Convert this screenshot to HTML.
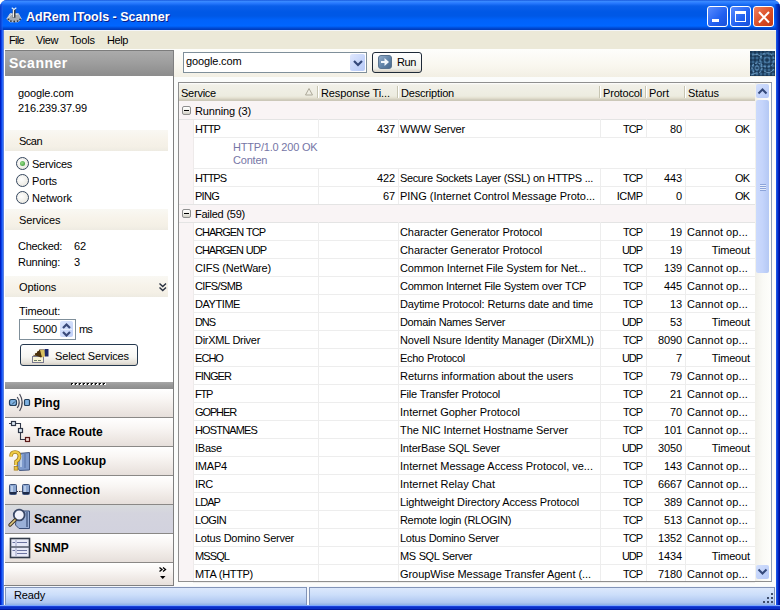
<!DOCTYPE html>
<html><head><meta charset="utf-8">
<style>
*{margin:0;padding:0;box-sizing:border-box}
html,body{width:780px;height:610px;overflow:hidden;background:#fff;font-family:"Liberation Sans",sans-serif;font-size:11px;color:#000;letter-spacing:-0.15px}
.a{position:absolute;white-space:nowrap}
#win{position:absolute;left:0;top:0;width:780px;height:610px;background:#0A3FD8;border-radius:7px 7px 0 0;overflow:hidden}
#title{left:0;top:0;width:780px;height:30px;background:linear-gradient(#0A46D0 0px,#3D8DFF 1px,#2A7BFF 3px,#0A5FEA 6px,#0058E6 12px,#0058E6 16px,#0062FA 20px,#0066FF 26px,#004BD6 28px,#003AB5 30px)}
#ttext{left:26px;top:10px;font-size:12.5px;font-weight:bold;color:#fff;text-shadow:1px 1px 0 #0A1E8A;letter-spacing:0}
.tb{top:6px;width:21px;height:21px;border:1px solid #fff;border-radius:3px;background:linear-gradient(135deg,#5A8CFF,#2060F0 60%,#1A50D8)}
#client{left:4px;top:30px;width:772px;height:576px;background:#FBFCFB}
#lb{left:0;top:30px;width:4px;height:580px;background:linear-gradient(90deg,#001EC4 0,#001EC4 1px,#0A44E6 1px,#0A44E6 2px,#2A66FA 2px,#2A66FA 3px,#5A7EE0 3px)}
#rb{left:776px;top:30px;width:4px;height:580px;background:linear-gradient(90deg,#1A52E4 0,#1A52E4 1px,#0A3CD8 1px,#0A3CD8 2px,#0024B8 2px,#0024B8 3px,#0010A0 3px)}
#bb{left:0;top:605px;width:780px;height:5px;background:linear-gradient(#7AA6FF 0,#7AA6FF 1px,#1A40D8 1px,#1A40D8 2px,#0A30C8 2px,#0A30C8 4px,#0018A0 4px)}
#menu{left:4px;top:30px;width:772px;height:19px;background:#ECE9D8;border-top:1px solid #F4F6FA}
.mi{top:3px}
/* left panel */
#lp{left:4px;top:50px;width:170px;height:536px;background:#fff;border-right:1px solid #7F7F7F;border-bottom:1px solid #7F7F7F}
#lphead{left:5px;top:50px;width:168px;height:26px;background:linear-gradient(#ABABAB,#A0A0A0 40%,#8C8C8C);border-top:1px solid #7C7C7C}
#lphead span{left:4px;top:4px;font-size:14px;font-weight:bold;color:#fff;letter-spacing:0.5px}
.sec{left:5px;width:163px;height:21px;background:linear-gradient(#F9F8F3 0%,#F7F3EA 45%,#F4F0E6 80%,#EEEBE2 100%)}
.sec span{left:14px;top:5px}
.radio{width:13px;height:13px;border-radius:50%;border:1px solid #34465E;background:radial-gradient(circle at 40% 40%,#fff,#E4E2D8)}
.radio.on::after{content:"";position:absolute;left:3px;top:3px;width:5px;height:5px;border-radius:50%;background:radial-gradient(circle at 40% 40%,#9AE08A,#2C8C2C)}
.navb{left:5px;width:168px;height:29px;background:linear-gradient(#FFFFFF,#F9F6F4 35%,#EEE8E4 75%,#E6DFDB);border-bottom:1px solid #8A8886}
.navb span{left:29px;top:7px;font-size:12px;font-weight:bold;letter-spacing:0}
/* right */
#tool{left:174px;top:49px;width:602px;height:28px;background:linear-gradient(#FEFEFC,#F9F7EF 60%,#F2EFE4)}
#combo{left:183px;top:52px;width:184px;height:21px;background:#fff;border:1px solid #7F8F9A}
#combo span{left:2px;top:2px}
#drop{left:350px;top:54px;width:15px;height:17px;border-radius:2px;background:linear-gradient(135deg,#E0E8FE,#C4D4FA 60%,#B8CAF6)}
#run{left:372px;top:52px;width:50px;height:21px;border:1px solid #1E2A38;border-radius:3px;background:linear-gradient(#FFFFFF,#F0F0EA 80%,#D6D0C5)}
#tbl{left:178px;top:82px;width:594px;height:500px;background:#fff;border:1px solid #8F8F8F;border-right-color:#8FA0B8}
#hdr{left:179px;top:83px;width:576px;height:18px;background:linear-gradient(#FFFFFF 0px,#F1F0E8 2px,#EDECE0 13px,#E4E0D0 15px,#D8D4C4 16px,#CCC8B9 17px)}
.hs{top:86px;width:1px;height:12px;background:#C7C5B2;box-shadow:1px 0 0 #fff}
.ht{top:87px}
.t{}
.u{letter-spacing:-0.8px}
.dd{letter-spacing:0.6px}
.r{text-align:right}
.hl{height:1px;background:#EDEDED}
.vl{width:1px;background:#EDEDED}
.gl{background:#E4E4E4}
.grp{background:#F9F4F5}
#gut{left:179px;top:101px;width:15px;height:480px;background:#F9F4F5;border-right:1px solid #EEEAEA}
.minus{width:9px;height:9px;border:1px solid #8E8E8E;border-radius:2px;background:linear-gradient(#FFFFFF,#F0EFEA 50%,#D2D0C6)}
.minus::after{content:"";position:absolute;left:1px;top:3px;width:5px;height:1px;background:#000}
.det{color:#7676A6;line-height:13px;letter-spacing:-0.2px}
#sb{left:755px;top:83px;width:16px;height:498px;background:linear-gradient(90deg,#F1F0EA,#FAFAF6 50%,#FEFEFB)}
.sbb{left:756px;width:13px;height:14px;border-radius:2px;background:linear-gradient(135deg,#D2DFFD,#B6C9F7)}
#thumb{left:756px;top:100px;width:13px;height:173px;border-radius:2px;background:linear-gradient(90deg,#CCDAFC,#C4D4FB 50%,#B4C8F4)}
#status{left:4px;top:586px;width:772px;height:19px;background:#F4F7FC}
.sp{top:587px;height:18px;border:1px solid #8294B8;border-bottom:none;background:linear-gradient(#DCE8FC,#CCDEFA 40%,#AFC7F0 85%,#8FB0E4)}
</style></head><body>
<div id="win">
  <div id="title" class="a"></div>
  <!-- app icon -->
  <svg class="a" style="left:3px;top:4px" width="20" height="20" viewBox="0 0 24 24">
    <path d="M4.5 18L8.5 11.5H18.5L22 18L18 21.5H8.5Z" fill="#A4ACB4" stroke="#D8E0EA" stroke-width="0.8"/>
    <path d="M6 17.5L9.5 12.5H17.5" stroke="#E8ECF2" stroke-width="1" fill="none"/>
    <circle cx="6.5" cy="18.5" r="1.1" fill="#283040"/><circle cx="9.5" cy="20.5" r="1.1" fill="#283040"/>
    <circle cx="13.5" cy="21" r="1.1" fill="#283040"/><circle cx="17.5" cy="20.5" r="1.1" fill="#283040"/>
    <circle cx="20.5" cy="18.5" r="1.1" fill="#283040"/>
    <rect x="11.5" y="6" width="3.5" height="10.5" fill="#3A4048"/>
    <rect x="11.8" y="6.5" width="1.4" height="9.5" fill="#F0F0F0"/>
    <path d="M10.5 4.5L13.2 6.5L16 4.5" stroke="#E0EEFF" stroke-width="1.4" fill="none"/>
  </svg>
  <div class="a" style="left:775px;top:4px;width:5px;height:26px;background:linear-gradient(90deg,rgba(0,60,220,0.3),#0034C8 40%,#0020A0 80%,#001890)"></div>
  <div class="a" style="left:0;top:4px;width:3px;height:26px;background:linear-gradient(90deg,#0838C8,rgba(40,110,250,0.5))"></div>
  <div id="ttext" class="a">AdRem ITools - Scanner</div>
  <div class="a tb" style="left:707px"><div class="a" style="left:4px;top:12px;width:7px;height:3px;background:#fff"></div></div>
  <div class="a tb" style="left:730px"><div class="a" style="left:4px;top:4px;width:11px;height:11px;border:1px solid #fff;border-top-width:3px"></div></div>
  <div class="a tb" style="left:753px;background:linear-gradient(135deg,#F08060,#D84A22 60%,#C23A15)">
    <svg class="a" style="left:3px;top:3px" width="14" height="14"><path d="M2 2L12 12.5M12 2L2 12.5" stroke="#fff" stroke-width="2"/></svg>
  </div>
  <div id="client" class="a"></div>
  <div id="lb" class="a"></div><div id="rb" class="a"></div><div id="bb" class="a"></div>
  <div id="menu" class="a">
    <span class="a mi" style="letter-spacing:-0.68px;left:5px">File</span>
    <span class="a mi" style="letter-spacing:-0.41px;left:32px">View</span>
    <span class="a mi" style="letter-spacing:-0.14px;left:66px">Tools</span>
    <span class="a mi" style="letter-spacing:-0.41px;left:103px">Help</span>
  </div>

  <!-- left panel -->
  <div id="lp" class="a"></div>
  <div id="lphead" class="a"><span class="a">Scanner</span></div>
  <span class="a" style="letter-spacing:-0.14px;left:18px;top:87px">google.com</span>
  <span class="a" style="letter-spacing:-0.10px;left:18px;top:102px">216.239.37.99</span>

  <div class="a sec" style="top:130px"><span class="a" style="letter-spacing:-0.52px">Scan</span></div>
  <div class="a radio on" style="left:16px;top:157px"></div><span class="a" style="letter-spacing:-0.27px;left:32px;top:158px">Services</span>
  <div class="a radio" style="left:16px;top:174px"></div><span class="a" style="letter-spacing:-0.14px;left:32px;top:175px">Ports</span>
  <div class="a radio" style="left:16px;top:191px"></div><span class="a" style="letter-spacing:-0.05px;left:32px;top:192px">Network</span>

  <div class="a sec" style="top:209px"><span class="a" style="letter-spacing:-0.09px">Services</span></div>
  <span class="a" style="letter-spacing:-0.31px;left:18px;top:240px">Checked:</span><span class="a" style="letter-spacing:-0.12px;left:74px;top:240px">62</span>
  <span class="a" style="letter-spacing:-0.26px;left:18px;top:256px">Running:</span><span class="a" style="letter-spacing:-0.12px;left:74px;top:256px">3</span>

  <div class="a sec" style="top:276px"><span class="a" style="letter-spacing:-0.13px">Options</span>
    <svg class="a" style="left:153px;top:6px" width="9" height="10"><path d="M1.5 1.5L4.75 4.5L8 1.5M1.5 5.5L4.75 8.5L8 5.5" fill="none" stroke="#283040" stroke-width="1.4"/></svg>
  </div>
  <span class="a" style="letter-spacing:-0.17px;left:19px;top:305px">Timeout:</span>
  <div class="a" style="left:19px;top:319px;width:57px;height:21px;border:1px solid #7F8F9A;background:#fff"></div>
  <span class="a r" style="letter-spacing:-0.12px;margin-right:0.12px;right:723px;top:323px">5000</span>
  <div class="a" style="left:60px;top:321px;width:13px;height:16px;background:linear-gradient(135deg,#DCE6FD,#C0D0F8);border-radius:2px"></div>
  <svg class="a" style="left:60px;top:321px" width="13" height="16"><path d="M3 7L6.5 3.5L10 7M3 11L6.5 14.5L10 11" fill="none" stroke="#3A4A7A" stroke-width="2.2"/><path d="M1 8.5H12" stroke="#E8EEFC" stroke-width="1"/></svg>
  <span class="a" style="letter-spacing:-0.84px;left:79px;top:323px">ms</span>
  <div class="a" style="left:20px;top:344px;width:118px;height:22px;border:1px solid #24384E;border-radius:3px;background:linear-gradient(#FFFFFF,#F6F6F2 60%,#E4E0D8 90%,#D2CCC2)"></div>
  <svg class="a" style="left:31px;top:346px" width="20" height="19" viewBox="31 346 20 19">
    <rect x="32.5" y="356.5" width="11" height="6" fill="#F6F2D4" stroke="#7A7A90" stroke-width="1"/>
    <path d="M34 360.5H37M38 360.5H41" stroke="#6A7A6A" stroke-width="1"/>
    <path d="M33 355.5L39.5 349.5H44L46 354L41 357.5L37 356Z" fill="#4A300C"/>
    <path d="M40 350H45.5L47 355.5L42 357.5Z" fill="#D8C060"/>
    <path d="M44.5 349H48.5V356.5H45Z" fill="#1C2868"/>
    <path d="M34 355L35 354M36 353L37 352M38 351L39 350" stroke="#F0E8D0" stroke-width="1"/>
  </svg>
  <span class="a" style="letter-spacing:-0.13px;word-spacing:0.07px;left:55px;top:350px">Select Services</span>

  <!-- splitter -->
  <div class="a" style="left:5px;top:382px;width:168px;height:7px;background:linear-gradient(#A8A8A8,#999 40%,#8C8C8C)"></div>
  <svg class="a" style="left:0;top:0" width="120" height="400" viewBox="0 0 120 400"><path d="M71 383h2v1h-1v1h-1z" fill="#101010"/><path d="M72 385h2v-2h-1v1h-1z" fill="#FFFFFF"/><path d="M75 383h2v1h-1v1h-1z" fill="#101010"/><path d="M76 385h2v-2h-1v1h-1z" fill="#FFFFFF"/><path d="M79 383h2v1h-1v1h-1z" fill="#101010"/><path d="M80 385h2v-2h-1v1h-1z" fill="#FFFFFF"/><path d="M83 383h2v1h-1v1h-1z" fill="#101010"/><path d="M84 385h2v-2h-1v1h-1z" fill="#FFFFFF"/><path d="M87 383h2v1h-1v1h-1z" fill="#101010"/><path d="M88 385h2v-2h-1v1h-1z" fill="#FFFFFF"/><path d="M91 383h2v1h-1v1h-1z" fill="#101010"/><path d="M92 385h2v-2h-1v1h-1z" fill="#FFFFFF"/><path d="M95 383h2v1h-1v1h-1z" fill="#101010"/><path d="M96 385h2v-2h-1v1h-1z" fill="#FFFFFF"/><path d="M99 383h2v1h-1v1h-1z" fill="#101010"/><path d="M100 385h2v-2h-1v1h-1z" fill="#FFFFFF"/><path d="M103 383h2v1h-1v1h-1z" fill="#101010"/><path d="M104 385h2v-2h-1v1h-1z" fill="#FFFFFF"/></svg>

  <div class="a navb" style="top:389px"><span class="a">Ping</span></div>
  <div class="a navb" style="top:418px"><span class="a">Trace Route</span></div>
  <div class="a navb" style="top:447px"><span class="a">DNS Lookup</span></div>
  <div class="a navb" style="top:476px"><span class="a">Connection</span></div>
  <div class="a navb" style="top:505px;background:linear-gradient(#D8DBDD,#D4D4DE 30%,#D2D2DE)"><span class="a" style="letter-spacing:-0.04px">Scanner</span></div>
  <div class="a navb" style="top:534px"><span class="a">SNMP</span></div>
  <div class="a" style="left:5px;top:563px;width:168px;height:22px;background:linear-gradient(#FFFFFF,#F9F6F4 35%,#EEE8E4 75%,#E6DFDB)"></div>
  <svg class="a" style="left:158px;top:566px" width="10" height="15"><path d="M1.5 1.5L4 3.5L1.5 5.5M5 1.5L7.5 3.5L5 5.5" fill="none" stroke="#000" stroke-width="1.3"/><path d="M2 10H7.5L4.75 13Z" fill="#000"/></svg>

  <!-- nav icons -->
  <svg class="a" style="left:0;top:380px" width="40" height="200" viewBox="0 380 40 200">
    <!-- ping -->
    <rect x="9.5" y="399.5" width="7" height="6" rx="2" fill="#7FB2E2" stroke="#24405C" stroke-width="1.2"/>
    <path d="M12 404.5L15 401.5" stroke="#2E4A64" stroke-width="1"/>
    <path d="M17.2 397Q21.2 402.5 17.2 408" fill="none" stroke="#4A4C5A" stroke-width="1.2"/>
    <path d="M19.6 394Q24.8 402.5 19.6 411" fill="none" stroke="#4A4C5A" stroke-width="1.2"/>
    <rect x="24.5" y="399.5" width="5" height="6" rx="1" fill="#7FB2E2" stroke="#24405C" stroke-width="1.2"/>
    <!-- trace route -->
    <path d="M9 423.5H12M15.5 423.5H20.5V429M20.5 432.5V439.5H25.5" fill="none" stroke="#303848" stroke-width="1.1"/>
    <rect x="11.5" y="421.5" width="4" height="4" fill="#DCE8F4" stroke="#303848" stroke-width="1.2"/>
    <rect x="18.5" y="428.5" width="4" height="4" fill="#DCE8F4" stroke="#303848" stroke-width="1.2"/>
    <rect x="25.5" y="437.5" width="4" height="4" fill="#F4D8D0" stroke="#5A1A18" stroke-width="1.2"/>
    <!-- dns -->
    <path d="M18.5 453.5L29.5 452.5V470L19.5 470.5L17 467Z" fill="#7E9ACC" stroke="#3A4E78" stroke-width="0.9"/>
    <path d="M21 455V467" stroke="#C8D8F0" stroke-width="1.5"/>
    <path d="M25 454V468" stroke="#5C78AC" stroke-width="1.2"/>
    <path d="M11 456.5Q11 452 15 452Q19.5 452 19.5 456.5Q19.5 459.5 16 461.5V465" fill="none" stroke="#A8821C" stroke-width="3.6"/>
    <path d="M11 456.5Q11 452 15 452Q19.5 452 19.5 456.5Q19.5 459.5 16 461.5V465" fill="none" stroke="#F0CC48" stroke-width="2"/>
    <rect x="14.2" y="466.5" width="3.6" height="3.6" fill="#E8C040" stroke="#A8821C" stroke-width="0.8"/>
    <!-- connection -->
    <rect x="9.5" y="484.5" width="7" height="10" rx="1" fill="#8CA6D0" stroke="#3E527A" stroke-width="1"/>
    <path d="M12 486V492" stroke="#D8E4F6" stroke-width="1.2"/>
    <rect x="10" y="492" width="6" height="2" fill="#1E2A48"/>
    <rect x="22.5" y="484.5" width="7" height="10" rx="1" fill="#8CA6D0" stroke="#3E527A" stroke-width="1"/>
    <path d="M25 486V492" stroke="#D8E4F6" stroke-width="1.2"/>
    <rect x="23" y="492" width="6" height="2" fill="#1E2A48"/>
    <path d="M16.5 491.5H22.5" stroke="#3A3A48" stroke-width="1.2" stroke-dasharray="1.5 1"/>
    <!-- scanner -->
    <path d="M17 511H29.5V528.5H19L15.5 525Z" fill="#9AB0D8" stroke="#3A4E78" stroke-width="1"/>
    <path d="M27 512V527" stroke="#3A4E78" stroke-width="1.2"/>
    <circle cx="19.2" cy="515" r="5.4" fill="#F2F2FC" stroke="#3A4868" stroke-width="1.8"/>
    <path d="M15 520L10 525" stroke="#3A3020" stroke-width="3.4" stroke-linecap="round"/>
    <path d="M15 520L10 525" stroke="#E0C880" stroke-width="1.6" stroke-linecap="round"/>
    <!-- snmp -->
    <rect x="10.5" y="538.5" width="19" height="19" fill="#E8EAF8" stroke="#343C4C" stroke-width="1.6"/>
    <path d="M10.5 547H29.5" stroke="#5A6070" stroke-width="1.6"/>
    <path d="M12.5 542.5H15M17 542.5H27M12.5 550.5H15M17 550.5H27M17 553.5H27" stroke="#6C74A0" stroke-width="1"/><path d="M16 540V546M16 548V556" stroke="#8890B8" stroke-width="0.8"/>
  </svg>
  <!-- right area -->
  <div id="tool" class="a"></div>
  <div id="combo" class="a"><span class="a" style="letter-spacing:-0.14px">google.com</span></div>
  <div id="drop" class="a"><svg class="a" style="left:2px;top:5px" width="12" height="9"><path d="M2 2L6 6L10 2" fill="none" stroke="#34487A" stroke-width="2.2"/></svg></div>
  <div id="run" class="a"></div>
  <svg class="a" style="left:378px;top:55px" width="14" height="14" viewBox="0 0 14 14">
    <defs><linearGradient id="rg" x1="0" y1="0" x2="1" y2="1"><stop offset="0" stop-color="#9AB2CE"/><stop offset="0.5" stop-color="#6486AA"/><stop offset="1" stop-color="#46668A"/></linearGradient></defs>
    <rect x="0.5" y="0.5" width="13" height="13" rx="2.5" fill="url(#rg)" stroke="#5A7490" stroke-width="1"/>
    <path d="M3 6H6.5V3L11 7L6.5 11V8H3Z" fill="#F4F8FC"/>
  </svg>
  <span class="a" style="letter-spacing:-0.40px;left:397px;top:56px">Run</span>
  <svg class="a" style="left:750px;top:51px" width="25" height="25" viewBox="0 0 25 25">
    <rect width="25" height="25" fill="#24486A"/>
    <rect width="25" height="25" fill="url(#gn)" opacity="0.9"/>
    <circle cx="7" cy="17" r="5" fill="none" stroke="#6C9CC4" stroke-width="1.2" stroke-dasharray="2 1.5"/>
    <circle cx="7" cy="17" r="2" fill="none" stroke="#5A88B0" stroke-width="1"/>
    <circle cx="17" cy="9" r="7" fill="none" stroke="#5E90BA" stroke-width="1.2" stroke-dasharray="2.5 1.5"/>
    <circle cx="17" cy="9" r="3" fill="none" stroke="#4A7AA4" stroke-width="1"/>
    <path d="M2 4Q8 2 12 6M14 20Q20 24 24 18M1 24L6 22" stroke="#7AA8CC" stroke-width="1" fill="none" opacity="0.8"/>
    <defs><pattern id="gn" width="4" height="4" patternUnits="userSpaceOnUse"><rect x="0" y="0" width="2" height="2" fill="#183654"/><rect x="2" y="2" width="2" height="2" fill="#3C6A92"/></pattern></defs>
  </svg>

  <div id="tbl" class="a"></div>
  <div id="hdr" class="a"></div>
  <div class="a hs" style="left:317px"></div>
  <div class="a hs" style="left:397px"></div>
  <div class="a hs" style="left:599px"></div>
  <div class="a hs" style="left:645px"></div>
  <div class="a hs" style="left:684px"></div>
  <span class="a ht" style="letter-spacing:-0.24px;left:181px">Service</span>
  <svg class="a" style="left:305px;top:88px" width="8" height="8"><path d="M4 0.5L7.5 7H0.5Z" fill="none" stroke="#ACA899" stroke-width="1"/></svg>
  <span class="a ht" style="letter-spacing:-0.10px;word-spacing:0.04px;left:321px">Response Ti...</span>
  <span class="a ht" style="letter-spacing:-0.18px;left:401px">Description</span>
  <span class="a ht" style="letter-spacing:-0.17px;left:603px">Protocol</span>
  <span class="a ht" style="letter-spacing:-0.05px;left:649px">Port</span>
  <span class="a ht" style="letter-spacing:-0.03px;left:688px">Status</span>
  <div id="gut" class="a"></div>
<div class="a grp" style="left:179px;top:101px;width:576px;height:18px"></div>
<div class="a hl gl" style="left:179px;top:119px;width:576px"></div>
<div class="a minus" style="left:182px;top:106px"></div>
<span class="a t" style="letter-spacing:-0.14px;word-spacing:0.08px;left:195px;top:105px">Running (3)</span>
<div class="a hl" style="left:193px;top:137px;width:562px"></div>
<div class="a vl" style="left:318px;top:119px;height:19px"></div>
<div class="a vl" style="left:398px;top:119px;height:19px"></div>
<div class="a vl" style="left:600px;top:119px;height:19px"></div>
<div class="a vl" style="left:646px;top:119px;height:19px"></div>
<div class="a vl" style="left:685px;top:119px;height:19px"></div>
<span class="a t" style="letter-spacing:-0.93px;left:195px;top:123px">HTTP</span>
<span class="a t r" style="letter-spacing:-0.12px;margin-right:0.12px;right:385px;top:123px">437</span>
<span class="a t" style="letter-spacing:-0.17px;word-spacing:0.11px;left:400px;top:123px">WWW Server</span>
<span class="a t r" style="letter-spacing:-1.00px;margin-right:1.00px;right:137px;top:123px">TCP</span>
<span class="a t r" style="letter-spacing:-0.12px;margin-right:0.12px;right:98px;top:123px">80</span>
<span class="a t r" style="letter-spacing:-0.95px;margin-right:0.95px;right:30px;top:123px">OK</span>
<div class="a hl" style="left:193px;top:168px;width:562px"></div>
<span class="a t det" style="left:233px;top:141px">HTTP/1.0 200 OK<br>Conten</span>
<div class="a hl" style="left:193px;top:186px;width:562px"></div>
<div class="a vl" style="left:318px;top:168px;height:19px"></div>
<div class="a vl" style="left:398px;top:168px;height:19px"></div>
<div class="a vl" style="left:600px;top:168px;height:19px"></div>
<div class="a vl" style="left:646px;top:168px;height:19px"></div>
<div class="a vl" style="left:685px;top:168px;height:19px"></div>
<span class="a t" style="letter-spacing:-1.01px;left:195px;top:172px">HTTPS</span>
<span class="a t r" style="letter-spacing:-0.12px;margin-right:0.12px;right:385px;top:172px">422</span>
<span class="a t" style="letter-spacing:-0.37px;word-spacing:0.31px;left:400px;top:172px">Secure Sockets Layer (SSL) on HTTPS ...</span>
<span class="a t r" style="letter-spacing:-1.00px;margin-right:1.00px;right:137px;top:172px">TCP</span>
<span class="a t r" style="letter-spacing:-0.12px;margin-right:0.12px;right:98px;top:172px">443</span>
<span class="a t r" style="letter-spacing:-0.95px;margin-right:0.95px;right:30px;top:172px">OK</span>
<div class="a hl" style="left:193px;top:204px;width:562px"></div>
<div class="a vl" style="left:318px;top:186px;height:19px"></div>
<div class="a vl" style="left:398px;top:186px;height:19px"></div>
<div class="a vl" style="left:600px;top:186px;height:19px"></div>
<div class="a vl" style="left:646px;top:186px;height:19px"></div>
<div class="a vl" style="left:685px;top:186px;height:19px"></div>
<span class="a t" style="letter-spacing:-0.73px;left:195px;top:190px">PING</span>
<span class="a t r" style="letter-spacing:-0.12px;margin-right:0.12px;right:385px;top:190px">67</span>
<span class="a t" style="letter-spacing:-0.01px;word-spacing:-0.05px;left:400px;top:190px">PING (Internet Control Message Proto...</span>
<span class="a t r" style="letter-spacing:-0.38px;margin-right:0.38px;right:137px;top:190px">ICMP</span>
<span class="a t r" style="letter-spacing:-0.12px;margin-right:0.12px;right:98px;top:190px">0</span>
<span class="a t r" style="letter-spacing:-0.95px;margin-right:0.95px;right:30px;top:190px">OK</span>
<div class="a grp" style="left:179px;top:204px;width:576px;height:18px"></div>
<div class="a hl gl" style="left:179px;top:204px;width:576px"></div>
<div class="a hl gl" style="left:179px;top:222px;width:576px"></div>
<div class="a minus" style="left:182px;top:209px"></div>
<span class="a t" style="letter-spacing:-0.25px;word-spacing:0.19px;left:195px;top:208px">Failed (59)</span>
<div class="a hl" style="left:193px;top:240px;width:562px"></div>
<div class="a vl" style="left:318px;top:222px;height:19px"></div>
<div class="a vl" style="left:398px;top:222px;height:19px"></div>
<div class="a vl" style="left:600px;top:222px;height:19px"></div>
<div class="a vl" style="left:646px;top:222px;height:19px"></div>
<div class="a vl" style="left:685px;top:222px;height:19px"></div>
<span class="a t" style="letter-spacing:-0.98px;word-spacing:0.92px;left:195px;top:226px">CHARGEN TCP</span>
<span class="a t" style="letter-spacing:-0.08px;word-spacing:0.02px;left:400px;top:226px">Character Generator Protocol</span>
<span class="a t r" style="letter-spacing:-1.00px;margin-right:1.00px;right:137px;top:226px">TCP</span>
<span class="a t r" style="letter-spacing:-0.12px;margin-right:0.12px;right:98px;top:226px">19</span>
<span class="a t" style="letter-spacing:0.10px;word-spacing:-0.16px;left:687px;top:226px">Cannot op...</span>
<div class="a hl" style="left:193px;top:258px;width:562px"></div>
<div class="a vl" style="left:318px;top:240px;height:19px"></div>
<div class="a vl" style="left:398px;top:240px;height:19px"></div>
<div class="a vl" style="left:600px;top:240px;height:19px"></div>
<div class="a vl" style="left:646px;top:240px;height:19px"></div>
<div class="a vl" style="left:685px;top:240px;height:19px"></div>
<span class="a t" style="letter-spacing:-1.02px;word-spacing:0.96px;left:195px;top:244px">CHARGEN UDP</span>
<span class="a t" style="letter-spacing:-0.08px;word-spacing:0.02px;left:400px;top:244px">Character Generator Protocol</span>
<span class="a t r" style="letter-spacing:-1.08px;margin-right:1.08px;right:137px;top:244px">UDP</span>
<span class="a t r" style="letter-spacing:-0.12px;margin-right:0.12px;right:98px;top:244px">19</span>
<span class="a t r" style="letter-spacing:-0.19px;margin-right:0.19px;right:30px;top:244px">Timeout</span>
<div class="a hl" style="left:193px;top:276px;width:562px"></div>
<div class="a vl" style="left:318px;top:258px;height:19px"></div>
<div class="a vl" style="left:398px;top:258px;height:19px"></div>
<div class="a vl" style="left:600px;top:258px;height:19px"></div>
<div class="a vl" style="left:646px;top:258px;height:19px"></div>
<div class="a vl" style="left:685px;top:258px;height:19px"></div>
<span class="a t" style="letter-spacing:-0.18px;word-spacing:0.12px;left:195px;top:262px">CIFS (NetWare)</span>
<span class="a t" style="letter-spacing:-0.13px;word-spacing:0.07px;left:400px;top:262px">Common Internet File System for Net...</span>
<span class="a t r" style="letter-spacing:-1.00px;margin-right:1.00px;right:137px;top:262px">TCP</span>
<span class="a t r" style="letter-spacing:-0.12px;margin-right:0.12px;right:98px;top:262px">139</span>
<span class="a t" style="letter-spacing:0.10px;word-spacing:-0.16px;left:687px;top:262px">Cannot op...</span>
<div class="a hl" style="left:193px;top:294px;width:562px"></div>
<div class="a vl" style="left:318px;top:276px;height:19px"></div>
<div class="a vl" style="left:398px;top:276px;height:19px"></div>
<div class="a vl" style="left:600px;top:276px;height:19px"></div>
<div class="a vl" style="left:646px;top:276px;height:19px"></div>
<div class="a vl" style="left:685px;top:276px;height:19px"></div>
<span class="a t" style="letter-spacing:-0.62px;left:195px;top:280px">CIFS/SMB</span>
<span class="a t" style="letter-spacing:-0.27px;word-spacing:0.21px;left:400px;top:280px">Common Internet File System over TCP</span>
<span class="a t r" style="letter-spacing:-1.00px;margin-right:1.00px;right:137px;top:280px">TCP</span>
<span class="a t r" style="letter-spacing:-0.12px;margin-right:0.12px;right:98px;top:280px">445</span>
<span class="a t" style="letter-spacing:0.10px;word-spacing:-0.16px;left:687px;top:280px">Cannot op...</span>
<div class="a hl" style="left:193px;top:312px;width:562px"></div>
<div class="a vl" style="left:318px;top:294px;height:19px"></div>
<div class="a vl" style="left:398px;top:294px;height:19px"></div>
<div class="a vl" style="left:600px;top:294px;height:19px"></div>
<div class="a vl" style="left:646px;top:294px;height:19px"></div>
<div class="a vl" style="left:685px;top:294px;height:19px"></div>
<span class="a t" style="letter-spacing:-0.44px;left:195px;top:298px">DAYTIME</span>
<span class="a t" style="letter-spacing:-0.14px;word-spacing:0.08px;left:400px;top:298px">Daytime Protocol: Returns date and time</span>
<span class="a t r" style="letter-spacing:-1.00px;margin-right:1.00px;right:137px;top:298px">TCP</span>
<span class="a t r" style="letter-spacing:-0.12px;margin-right:0.12px;right:98px;top:298px">13</span>
<span class="a t" style="letter-spacing:0.10px;word-spacing:-0.16px;left:687px;top:298px">Cannot op...</span>
<div class="a hl" style="left:193px;top:330px;width:562px"></div>
<div class="a vl" style="left:318px;top:312px;height:19px"></div>
<div class="a vl" style="left:398px;top:312px;height:19px"></div>
<div class="a vl" style="left:600px;top:312px;height:19px"></div>
<div class="a vl" style="left:646px;top:312px;height:19px"></div>
<div class="a vl" style="left:685px;top:312px;height:19px"></div>
<span class="a t" style="letter-spacing:-1.08px;left:195px;top:316px">DNS</span>
<span class="a t" style="letter-spacing:-0.36px;word-spacing:0.30px;left:400px;top:316px">Domain Names Server</span>
<span class="a t r" style="letter-spacing:-1.08px;margin-right:1.08px;right:137px;top:316px">UDP</span>
<span class="a t r" style="letter-spacing:-0.12px;margin-right:0.12px;right:98px;top:316px">53</span>
<span class="a t r" style="letter-spacing:-0.19px;margin-right:0.19px;right:30px;top:316px">Timeout</span>
<div class="a hl" style="left:193px;top:348px;width:562px"></div>
<div class="a vl" style="left:318px;top:330px;height:19px"></div>
<div class="a vl" style="left:398px;top:330px;height:19px"></div>
<div class="a vl" style="left:600px;top:330px;height:19px"></div>
<div class="a vl" style="left:646px;top:330px;height:19px"></div>
<div class="a vl" style="left:685px;top:330px;height:19px"></div>
<span class="a t" style="letter-spacing:-0.30px;word-spacing:0.24px;left:195px;top:334px">DirXML Driver</span>
<span class="a t" style="letter-spacing:-0.13px;word-spacing:0.07px;left:400px;top:334px">Novell Nsure Identity Manager (DirXML))</span>
<span class="a t r" style="letter-spacing:-1.00px;margin-right:1.00px;right:137px;top:334px">TCP</span>
<span class="a t r" style="letter-spacing:-0.12px;margin-right:0.12px;right:98px;top:334px">8090</span>
<span class="a t" style="letter-spacing:0.10px;word-spacing:-0.16px;left:687px;top:334px">Cannot op...</span>
<div class="a hl" style="left:193px;top:366px;width:562px"></div>
<div class="a vl" style="left:318px;top:348px;height:19px"></div>
<div class="a vl" style="left:398px;top:348px;height:19px"></div>
<div class="a vl" style="left:600px;top:348px;height:19px"></div>
<div class="a vl" style="left:646px;top:348px;height:19px"></div>
<div class="a vl" style="left:685px;top:348px;height:19px"></div>
<span class="a t" style="letter-spacing:-0.95px;left:195px;top:352px">ECHO</span>
<span class="a t" style="letter-spacing:-0.29px;word-spacing:0.23px;left:400px;top:352px">Echo Protocol</span>
<span class="a t r" style="letter-spacing:-1.08px;margin-right:1.08px;right:137px;top:352px">UDP</span>
<span class="a t r" style="letter-spacing:-0.12px;margin-right:0.12px;right:98px;top:352px">7</span>
<span class="a t r" style="letter-spacing:-0.19px;margin-right:0.19px;right:30px;top:352px">Timeout</span>
<div class="a hl" style="left:193px;top:384px;width:562px"></div>
<div class="a vl" style="left:318px;top:366px;height:19px"></div>
<div class="a vl" style="left:398px;top:366px;height:19px"></div>
<div class="a vl" style="left:600px;top:366px;height:19px"></div>
<div class="a vl" style="left:646px;top:366px;height:19px"></div>
<div class="a vl" style="left:685px;top:366px;height:19px"></div>
<span class="a t" style="letter-spacing:-0.93px;left:195px;top:370px">FINGER</span>
<span class="a t" style="letter-spacing:-0.05px;word-spacing:-0.01px;left:400px;top:370px">Returns information about the users</span>
<span class="a t r" style="letter-spacing:-1.00px;margin-right:1.00px;right:137px;top:370px">TCP</span>
<span class="a t r" style="letter-spacing:-0.12px;margin-right:0.12px;right:98px;top:370px">79</span>
<span class="a t" style="letter-spacing:0.10px;word-spacing:-0.16px;left:687px;top:370px">Cannot op...</span>
<div class="a hl" style="left:193px;top:402px;width:562px"></div>
<div class="a vl" style="left:318px;top:384px;height:19px"></div>
<div class="a vl" style="left:398px;top:384px;height:19px"></div>
<div class="a vl" style="left:600px;top:384px;height:19px"></div>
<div class="a vl" style="left:646px;top:384px;height:19px"></div>
<div class="a vl" style="left:685px;top:384px;height:19px"></div>
<span class="a t" style="letter-spacing:-1.26px;left:195px;top:388px">FTP</span>
<span class="a t" style="letter-spacing:-0.22px;word-spacing:0.16px;left:400px;top:388px">File Transfer Protocol</span>
<span class="a t r" style="letter-spacing:-1.00px;margin-right:1.00px;right:137px;top:388px">TCP</span>
<span class="a t r" style="letter-spacing:-0.12px;margin-right:0.12px;right:98px;top:388px">21</span>
<span class="a t" style="letter-spacing:0.10px;word-spacing:-0.16px;left:687px;top:388px">Cannot op...</span>
<div class="a hl" style="left:193px;top:420px;width:562px"></div>
<div class="a vl" style="left:318px;top:402px;height:19px"></div>
<div class="a vl" style="left:398px;top:402px;height:19px"></div>
<div class="a vl" style="left:600px;top:402px;height:19px"></div>
<div class="a vl" style="left:646px;top:402px;height:19px"></div>
<div class="a vl" style="left:685px;top:402px;height:19px"></div>
<span class="a t" style="letter-spacing:-1.11px;left:195px;top:406px">GOPHER</span>
<span class="a t" style="letter-spacing:-0.02px;word-spacing:-0.04px;left:400px;top:406px">Internet Gopher Protocol</span>
<span class="a t r" style="letter-spacing:-1.00px;margin-right:1.00px;right:137px;top:406px">TCP</span>
<span class="a t r" style="letter-spacing:-0.12px;margin-right:0.12px;right:98px;top:406px">70</span>
<span class="a t" style="letter-spacing:0.10px;word-spacing:-0.16px;left:687px;top:406px">Cannot op...</span>
<div class="a hl" style="left:193px;top:438px;width:562px"></div>
<div class="a vl" style="left:318px;top:420px;height:19px"></div>
<div class="a vl" style="left:398px;top:420px;height:19px"></div>
<div class="a vl" style="left:600px;top:420px;height:19px"></div>
<div class="a vl" style="left:646px;top:420px;height:19px"></div>
<div class="a vl" style="left:685px;top:420px;height:19px"></div>
<span class="a t" style="letter-spacing:-0.85px;left:195px;top:424px">HOSTNAMES</span>
<span class="a t" style="letter-spacing:-0.06px;word-spacing:0.00px;left:400px;top:424px">The NIC Internet Hostname Server</span>
<span class="a t r" style="letter-spacing:-1.00px;margin-right:1.00px;right:137px;top:424px">TCP</span>
<span class="a t r" style="letter-spacing:-0.12px;margin-right:0.12px;right:98px;top:424px">101</span>
<span class="a t" style="letter-spacing:0.10px;word-spacing:-0.16px;left:687px;top:424px">Cannot op...</span>
<div class="a hl" style="left:193px;top:456px;width:562px"></div>
<div class="a vl" style="left:318px;top:438px;height:19px"></div>
<div class="a vl" style="left:398px;top:438px;height:19px"></div>
<div class="a vl" style="left:600px;top:438px;height:19px"></div>
<div class="a vl" style="left:646px;top:438px;height:19px"></div>
<div class="a vl" style="left:685px;top:438px;height:19px"></div>
<span class="a t" style="letter-spacing:-0.23px;left:195px;top:442px">IBase</span>
<span class="a t" style="letter-spacing:-0.20px;word-spacing:0.14px;left:400px;top:442px">InterBase SQL Sever</span>
<span class="a t r" style="letter-spacing:-1.08px;margin-right:1.08px;right:137px;top:442px">UDP</span>
<span class="a t r" style="letter-spacing:-0.12px;margin-right:0.12px;right:98px;top:442px">3050</span>
<span class="a t r" style="letter-spacing:-0.19px;margin-right:0.19px;right:30px;top:442px">Timeout</span>
<div class="a hl" style="left:193px;top:474px;width:562px"></div>
<div class="a vl" style="left:318px;top:456px;height:19px"></div>
<div class="a vl" style="left:398px;top:456px;height:19px"></div>
<div class="a vl" style="left:600px;top:456px;height:19px"></div>
<div class="a vl" style="left:646px;top:456px;height:19px"></div>
<div class="a vl" style="left:685px;top:456px;height:19px"></div>
<span class="a t" style="letter-spacing:-0.20px;left:195px;top:460px">IMAP4</span>
<span class="a t" style="letter-spacing:0.00px;word-spacing:-0.06px;left:400px;top:460px">Internet Message Access Protocol, ve...</span>
<span class="a t r" style="letter-spacing:-1.00px;margin-right:1.00px;right:137px;top:460px">TCP</span>
<span class="a t r" style="letter-spacing:-0.12px;margin-right:0.12px;right:98px;top:460px">143</span>
<span class="a t" style="letter-spacing:0.10px;word-spacing:-0.16px;left:687px;top:460px">Cannot op...</span>
<div class="a hl" style="left:193px;top:492px;width:562px"></div>
<div class="a vl" style="left:318px;top:474px;height:19px"></div>
<div class="a vl" style="left:398px;top:474px;height:19px"></div>
<div class="a vl" style="left:600px;top:474px;height:19px"></div>
<div class="a vl" style="left:646px;top:474px;height:19px"></div>
<div class="a vl" style="left:685px;top:474px;height:19px"></div>
<span class="a t" style="letter-spacing:-0.32px;left:195px;top:478px">IRC</span>
<span class="a t" style="letter-spacing:0.02px;word-spacing:-0.08px;left:400px;top:478px">Internet Relay Chat</span>
<span class="a t r" style="letter-spacing:-1.00px;margin-right:1.00px;right:137px;top:478px">TCP</span>
<span class="a t r" style="letter-spacing:-0.12px;margin-right:0.12px;right:98px;top:478px">6667</span>
<span class="a t" style="letter-spacing:0.10px;word-spacing:-0.16px;left:687px;top:478px">Cannot op...</span>
<div class="a hl" style="left:193px;top:510px;width:562px"></div>
<div class="a vl" style="left:318px;top:492px;height:19px"></div>
<div class="a vl" style="left:398px;top:492px;height:19px"></div>
<div class="a vl" style="left:600px;top:492px;height:19px"></div>
<div class="a vl" style="left:646px;top:492px;height:19px"></div>
<div class="a vl" style="left:685px;top:492px;height:19px"></div>
<span class="a t" style="letter-spacing:-0.94px;left:195px;top:496px">LDAP</span>
<span class="a t" style="letter-spacing:-0.14px;word-spacing:0.08px;left:400px;top:496px">Lightweight Directory Access Protocol</span>
<span class="a t r" style="letter-spacing:-1.00px;margin-right:1.00px;right:137px;top:496px">TCP</span>
<span class="a t r" style="letter-spacing:-0.12px;margin-right:0.12px;right:98px;top:496px">389</span>
<span class="a t" style="letter-spacing:0.10px;word-spacing:-0.16px;left:687px;top:496px">Cannot op...</span>
<div class="a hl" style="left:193px;top:528px;width:562px"></div>
<div class="a vl" style="left:318px;top:510px;height:19px"></div>
<div class="a vl" style="left:398px;top:510px;height:19px"></div>
<div class="a vl" style="left:600px;top:510px;height:19px"></div>
<div class="a vl" style="left:646px;top:510px;height:19px"></div>
<div class="a vl" style="left:685px;top:510px;height:19px"></div>
<span class="a t" style="letter-spacing:-0.65px;left:195px;top:514px">LOGIN</span>
<span class="a t" style="letter-spacing:-0.33px;word-spacing:0.27px;left:400px;top:514px">Remote login (RLOGIN)</span>
<span class="a t r" style="letter-spacing:-1.00px;margin-right:1.00px;right:137px;top:514px">TCP</span>
<span class="a t r" style="letter-spacing:-0.12px;margin-right:0.12px;right:98px;top:514px">513</span>
<span class="a t" style="letter-spacing:0.10px;word-spacing:-0.16px;left:687px;top:514px">Cannot op...</span>
<div class="a hl" style="left:193px;top:546px;width:562px"></div>
<div class="a vl" style="left:318px;top:528px;height:19px"></div>
<div class="a vl" style="left:398px;top:528px;height:19px"></div>
<div class="a vl" style="left:600px;top:528px;height:19px"></div>
<div class="a vl" style="left:646px;top:528px;height:19px"></div>
<div class="a vl" style="left:685px;top:528px;height:19px"></div>
<span class="a t" style="letter-spacing:-0.25px;word-spacing:0.19px;left:195px;top:532px">Lotus Domino Server</span>
<span class="a t" style="letter-spacing:-0.25px;word-spacing:0.19px;left:400px;top:532px">Lotus Domino Server</span>
<span class="a t r" style="letter-spacing:-1.00px;margin-right:1.00px;right:137px;top:532px">TCP</span>
<span class="a t r" style="letter-spacing:-0.12px;margin-right:0.12px;right:98px;top:532px">1352</span>
<span class="a t" style="letter-spacing:0.10px;word-spacing:-0.16px;left:687px;top:532px">Cannot op...</span>
<div class="a hl" style="left:193px;top:564px;width:562px"></div>
<div class="a vl" style="left:318px;top:546px;height:19px"></div>
<div class="a vl" style="left:398px;top:546px;height:19px"></div>
<div class="a vl" style="left:600px;top:546px;height:19px"></div>
<div class="a vl" style="left:646px;top:546px;height:19px"></div>
<div class="a vl" style="left:685px;top:546px;height:19px"></div>
<span class="a t" style="letter-spacing:-0.90px;left:195px;top:550px">MSSQL</span>
<span class="a t" style="letter-spacing:-0.41px;word-spacing:0.35px;left:400px;top:550px">MS SQL Server</span>
<span class="a t r" style="letter-spacing:-1.08px;margin-right:1.08px;right:137px;top:550px">UDP</span>
<span class="a t r" style="letter-spacing:-0.12px;margin-right:0.12px;right:98px;top:550px">1434</span>
<span class="a t r" style="letter-spacing:-0.19px;margin-right:0.19px;right:30px;top:550px">Timeout</span>
<div class="a hl" style="left:193px;top:582px;width:562px"></div>
<div class="a vl" style="left:318px;top:564px;height:19px"></div>
<div class="a vl" style="left:398px;top:564px;height:19px"></div>
<div class="a vl" style="left:600px;top:564px;height:19px"></div>
<div class="a vl" style="left:646px;top:564px;height:19px"></div>
<div class="a vl" style="left:685px;top:564px;height:19px"></div>
<span class="a t" style="letter-spacing:-0.32px;word-spacing:0.26px;left:195px;top:568px">MTA (HTTP)</span>
<span class="a t" style="letter-spacing:-0.06px;word-spacing:-0.00px;left:400px;top:568px">GroupWise Message Transfer Agent (...</span>
<span class="a t r" style="letter-spacing:-1.00px;margin-right:1.00px;right:137px;top:568px">TCP</span>
<span class="a t r" style="letter-spacing:-0.12px;margin-right:0.12px;right:98px;top:568px">7180</span>
<span class="a t" style="letter-spacing:0.10px;word-spacing:-0.16px;left:687px;top:568px">Cannot op...</span>
  <div class="a" style="left:178px;top:82px;width:594px;height:500px;border:1px solid #8F8F8F;border-right-color:#8FA0B8"></div>
  <div id="sb" class="a"></div>
  <div class="a sbb" style="left:756px;top:84px"><svg class="a" style="left:1px;top:3px" width="11" height="8"><path d="M1.5 6.5L5.5 2.5L9.5 6.5" fill="none" stroke="#34497A" stroke-width="2"/></svg></div>
  <div id="thumb" class="a"><div class="a" style="left:4px;top:84px;width:6px;height:7px;background:repeating-linear-gradient(#8CA4DA 0 1px,#E6EEFD 1px 2px)"></div></div>
  <div class="a sbb" style="left:756px;top:565px"><svg class="a" style="left:1px;top:3px" width="11" height="8"><path d="M1.5 1.5L5.5 5.5L9.5 1.5" fill="none" stroke="#34497A" stroke-width="2"/></svg></div>

  <!-- status -->
  <div id="status" class="a"></div>
  <div class="a sp" style="left:5px;width:302px"></div>
  <div class="a sp" style="left:309px;width:466px"></div>
  <span class="a" style="letter-spacing:-0.16px;left:14px;top:589px">Ready</span>
  <svg class="a" style="left:760px;top:590px" width="16" height="14"><path d="M11 3h2v2h-2zM7 7h2v2h-2zM11 7h2v2h-2zM3 11h2v2h-2zM7 11h2v2h-2zM11 11h2v2h-2z" fill="#3E4E6C"/></svg>
</div>
</body></html>
